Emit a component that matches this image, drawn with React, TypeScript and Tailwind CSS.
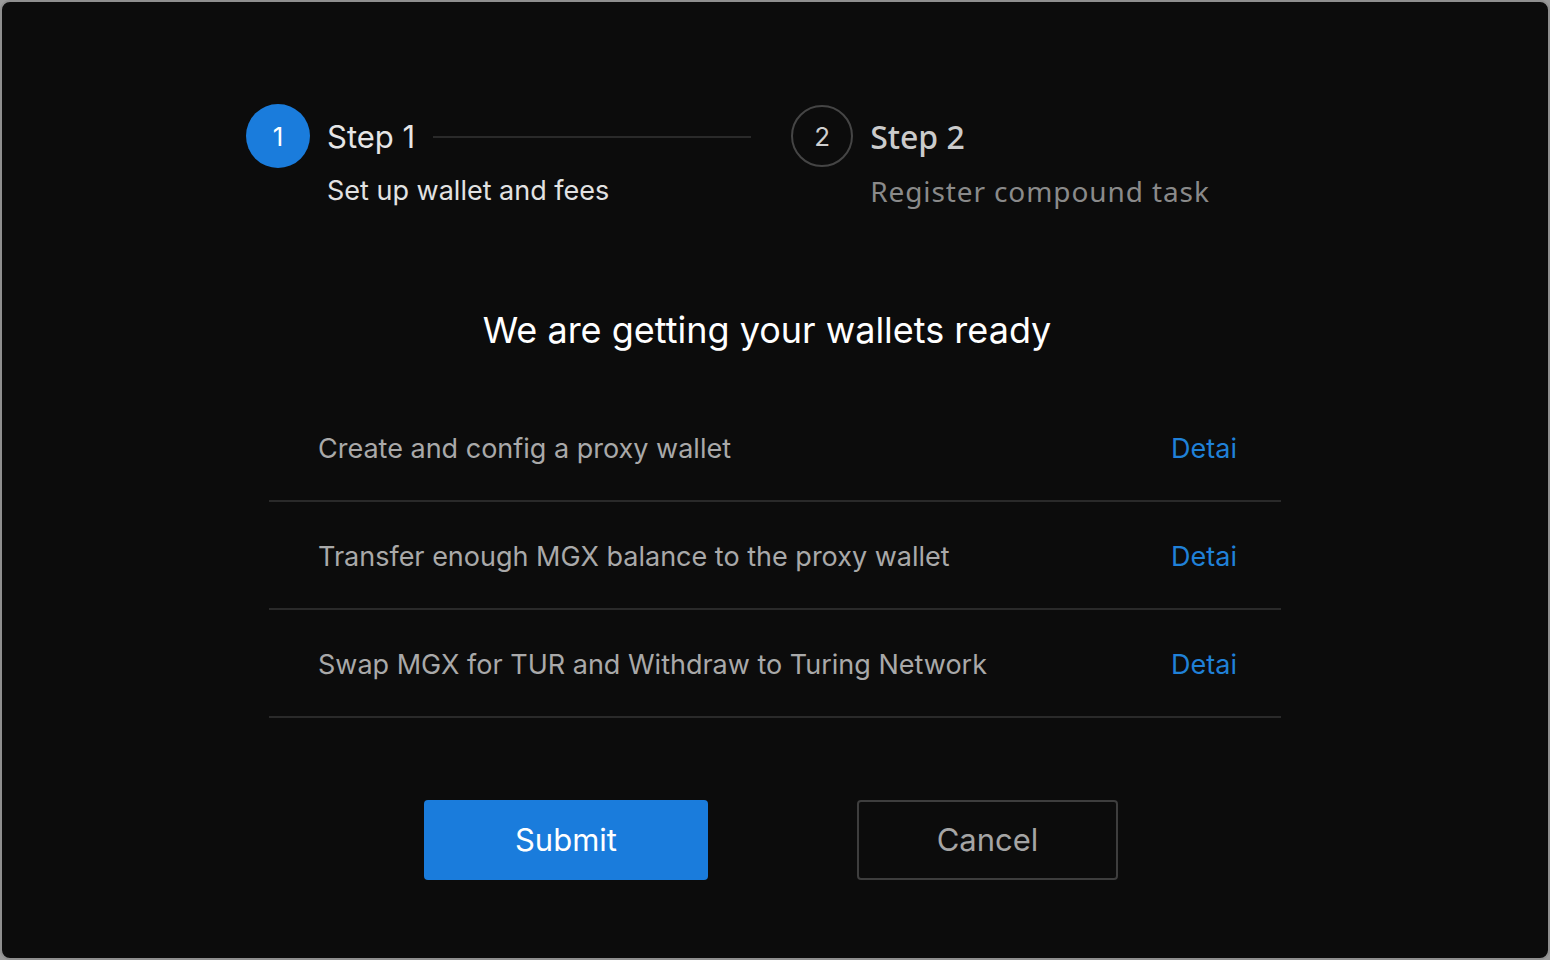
export default function App() {
  const tasks = [
    "Create and config a proxy wallet",
    "Transfer enough MGX balance to the proxy wallet",
    "Swap MGX for TUR and Withdraw to Turing Network",
  ];

  return (
    <div className="w-[1550px] h-[960px] bg-[#9a9a9a]" style={{ fontFamily: "Inter, 'Noto Sans', sans-serif" }}>
      <div className="w-full h-full bg-[#0c0c0c] border-2 border-[#8f8f8f] rounded-[10px] flex flex-col items-center">
        {/* Steps */}
        <div className="flex mt-[102px] w-[1058px] h-[120px]">
          <div className="flex">
            <div className="w-16 h-16 rounded-full bg-[#1a7cdc] flex items-center justify-center text-white text-[26px]">1</div>
            <div className="ml-[17px] pt-[15px]">
              <div className="flex items-center">
                <span className="text-[31px] leading-[36px] text-[#e6e6e6]">Step 1</span>
                <div className="ml-[18px] w-[318px] h-[2px] bg-[#2a2a2a]"></div>
              </div>
              <div className="mt-[20px] text-[27px] leading-[32px] text-[#e2e2e2]">Set up wallet and fees</div>
            </div>
          </div>
          <div className="flex ml-[40px]">
            <div className="w-[62px] h-[62px] rounded-full border-2 border-[#454545] flex items-center justify-center text-[#cfcfcf] text-[26px] mt-[1px]">2</div>
            <div className="ml-[17px] pt-[15px]" style={{ fontFamily: "'Noto Sans', Lato, sans-serif" }}>
              <div className="text-[32px] leading-[36px] font-medium text-[#cbcbcb]">Step 2</div>
              <div className="mt-[20px] text-[28px] leading-[32px] text-[#8a8a8a] tracking-[0.9px]">Register compound task</div>
            </div>
          </div>
        </div>

        {/* Heading */}
        <h1 className="mt-[84px] -ml-4 text-[36px] leading-[44px] text-white">We are getting your wallets ready</h1>

        {/* Task list */}
        <div className="mt-[42px] w-[1012px] flex flex-col">
          {tasks.map((task, i) => (
            <div key={i} className="h-[108px] flex items-center justify-between pt-[4px] pl-[49px] pr-[44px] border-b-2 border-[#2a2a2a]">
              <span className="text-[27px] text-[#a9a9a9]">{task}</span>
              <span className="text-[27px] text-[#2081d8]">Detai</span>
            </div>
          ))}
        </div>

        {/* Buttons */}
        <div className="mt-[82px] flex gap-[149px] -ml-[8px]">
          <button className="w-[284px] h-[80px] rounded-[4px] bg-[#1a7cdc] text-white text-[31px]">Submit</button>
          <button className="w-[261px] h-[80px] rounded-[4px] border-2 border-[#3e3e3e] text-[#a5a5a5] text-[31px]">Cancel</button>
        </div>
      </div>
    </div>
  );
}
